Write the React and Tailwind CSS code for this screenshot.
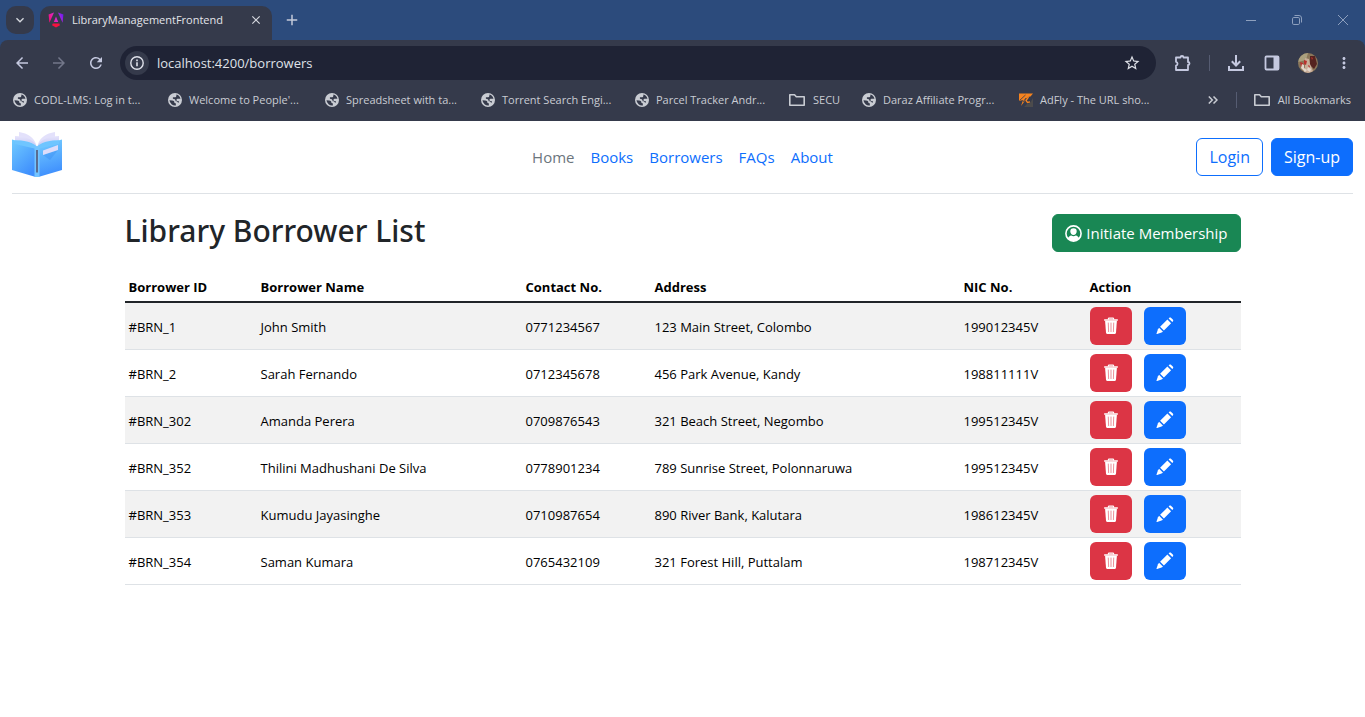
import React from "react";
import {
  MdArrowBack,
  MdArrowForward,
  MdRefresh,
  MdStarOutline,
  MdMoreVert,
  MdClose,
  MdAdd,
  MdExpandMore,
} from "react-icons/md";

const bookmarks = [
  { label: "CODL-LMS: Log in t...", icon: "globe", width: "w-[155px]" },
  { label: "Welcome to People'...", icon: "globe", width: "w-[157px]" },
  { label: "Spreadsheet with ta...", icon: "globe", width: "w-[156px]" },
  { label: "Torrent Search Engi...", icon: "globe", width: "w-[154px]" },
  { label: "Parcel Tracker Andr...", icon: "globe", width: "w-[153px]" },
  { label: "SECU", icon: "folder", width: "w-[74px]" },
  { label: "Daraz Affiliate Progr...", icon: "globe", width: "w-[157px]" },
  { label: "AdFly - The URL sho...", icon: "adfly", width: "w-[157px]" },
];

const borrowers = [
  ["#BRN_1", "John Smith", "0771234567", "123 Main Street, Colombo", "199012345V"],
  ["#BRN_2", "Sarah Fernando", "0712345678", "456 Park Avenue, Kandy", "198811111V"],
  ["#BRN_302", "Amanda Perera", "0709876543", "321 Beach Street, Negombo", "199512345V"],
  ["#BRN_352", "Thilini Madhushani De Silva", "0778901234", "789 Sunrise Street, Polonnaruwa", "199512345V"],
  ["#BRN_353", "Kumudu Jayasinghe", "0710987654", "890 River Bank, Kalutara", "198612345V"],
  ["#BRN_354", "Saman Kumara", "0765432109", "321 Forest Hill, Puttalam", "198712345V"],
];

function AngularLogo() {
  return (
    <svg viewBox="0 0 16 16" className="size-4 shrink-0" aria-hidden="true">
      <defs>
        <linearGradient id="ng" x1="0" y1="0.6" x2="1" y2="0.3">
          <stop offset="0" stopColor="#f4117a" />
          <stop offset="0.5" stopColor="#d92bd0" />
          <stop offset="1" stopColor="#6a1cf0" />
        </linearGradient>
      </defs>
      <path
        fill="url(#ng)"
        d="M6 .5.6 2.4l.8 8.4L6 .5Zm4 0 4.6 10.3.8-8.4L10 .5ZM8 4.600 5.800 10h4.400L8 4.600Z"
      />
      <path fill="#f5113f" d="M4.800 11.500 4 13.200l4 2.400 4-2.400-.8-1.700H4.800Z" />
    </svg>
  );
}

function AdflyIcon() {
  return (
    <svg viewBox="0 0 14 14" className="size-[14px] shrink-0" aria-hidden="true">
      <path fill="#4c4b4c" d="M14 5v9H5l3-3 3-1 3-5Z" />
      <path fill="#f5831f" d="M0 .5h14l-2.500 3L9 4 6.500 6 5 9l-3 4 2-6-4 1V.5Z" />
      <path fill="none" stroke="#f5831f" strokeWidth="1.300" d="M9.500 4 7 7.500l1.500 2 2.500-.7" />
      <path stroke="#353a4b" strokeWidth=".8" d="m.5 7.500 6-5.500M4 9l3-4" />
    </svg>
  );
}

function FolderIcon() {
  return (
    <svg viewBox="0 0 18 14" className="h-[14px] w-[18px] shrink-0" aria-hidden="true">
      <path
        fill="none"
        stroke="currentColor"
        strokeWidth="1.600"
        strokeLinejoin="round"
        d="M1.800 12.200V1.800h4.700l1.800 2h7.900v8.400H1.800Z"
      />
    </svg>
  );
}

function GlobeIcon() {
  return (
    <svg viewBox="2 2 20 20" className="size-[14px] shrink-0" fill="currentColor" aria-hidden="true">
      <path d="M12 2a10 10 0 1 0 0 20 10 10 0 0 0 0-20ZM4.100 12.500l3.900.1c2.200 0 3 1.100 3 2.700 0 1.200 1 1.500 2.200 1.500v2.900a8 8 0 0 1-9.100-7.200Zm11.900 3.100c0-1.500-1.500-1.900-3-1.900-.3-2.700-1.800-3.500-4-3.600V8h3.500c1.500 0 1.500-1.500 1.500-3.700a8 8 0 0 1 5.800 6l-3.300-.2c-1.700 0-2.500.9-2.500 2 0 1 .9 1.400 2 1.400 1.300 0 1.800.9 1.800 2.200l-1.800-.1Z" />
    </svg>
  );
}

function BookmarkIcon({ icon }) {
  if (icon === "folder") return <FolderIcon />;
  if (icon === "adfly") return <AdflyIcon />;
  return <GlobeIcon />;
}

function ProfilePicture() {
  return (
    <svg viewBox="0 0 20 20" className="size-5" aria-hidden="true">
      <defs>
        <clipPath id="avatar">
          <circle cx="10" cy="10" r="10" />
        </clipPath>
      </defs>
      <g clipPath="url(#avatar)">
        <path fill="#8a765a" d="M0 0h20v20H0z" />
        <path fill="#aaa07e" d="M0 0h10l-2 7-8 2z" />
        <path fill="#55231f" d="M12 3h5l2 8-3 5-4-4z" />
        <path fill="#c9ad98" d="m7 5 4 1 1 5 3 7-3 2H6l1-7z" />
        <path fill="#b8322e" d="m2 9 3 1 1 5-3-1zm4-2 3 1-1 4-2-1zm7-3 2 1-1 2zm-3 8 2 1-1 2z" />
        <path fill="#e2d6ca" d="m4 11 2 1 0 3 3 2-2 2-4-4zm6 3 3 2-1 3-3-2z" />
      </g>
    </svg>
  );
}

function BookLogo() {
  return (
    <svg viewBox="0 0 50 45" className="h-[45px] w-[50px]" aria-hidden="true">
      <defs>
        <linearGradient id="coverLeft" x1="0" y1="0" x2="0.6" y2="1">
          <stop offset="0" stopColor="#70cbff" />
          <stop offset="1" stopColor="#3f8ffd" />
        </linearGradient>
        <linearGradient id="coverRight" x1="0.3" y1="0" x2="0.5" y2="1">
          <stop offset="0" stopColor="#74ccff" />
          <stop offset="1" stopColor="#3c8cfd" />
        </linearGradient>
        <linearGradient id="pages" x1="0" y1="0" x2="0" y2="1">
          <stop offset="0" stopColor="#e6e4fc" />
          <stop offset="1" stopColor="#c6c8f3" />
        </linearGradient>
      </defs>
      <path fill="url(#coverLeft)" d="M0 7.500 24 14v31l-2-.5L0 38V7.500Z" />
      <path fill="url(#coverRight)" d="M50 7.500 26 14v31l2-.5L50 38V7.500Z" />
      <path fill="#e3e1fb" d="M7 0c9 1.500 15 5 17.500 13.500L7 9V0Zm36 0c-9 1.500-15 5-17.500 13.500L43 9V0Z" />
      <path fill="url(#pages)" d="M3 4c10 0 18 3 21.500 10C19 9.500 12 8.500 3 8.500V4Zm44 0c-10 0-18 3-21.500 10C31 9.500 38 8.500 47 8.500V4Z" />
      <path fill="#6fc5ff" d="M3 8.300c9 0 16 1.500 21.500 5.700v3L3 12V8.300Zm44 0c-9 0-16 1.500-21.500 5.700v3L47 12V8.300Z" />
      <path fill="#74c4ff" d="m22.500 13.500 2.500.8 2.500-.8V45h-5V13.500Z" />
      <path fill="#5a6c90" d="M24 18h2v22.500h-2z" />
      <path fill="#2f80ee" opacity=".3" d="m31 23 15-5-8 10-7-5Z" />
      <path fill="#dddcfa" d="m31 18.500 15-5.500v5l-15 5v-4.500Z" />
    </svg>
  );
}

function MemberIcon() {
  return (
    <svg viewBox="0 0 17 17" className="size-[17px]" fill="currentColor" aria-hidden="true">
      <circle cx="8.500" cy="8.500" r="7.600" fill="none" stroke="currentColor" strokeWidth="1.600" />
      <path d="M8.500 3.200a3.200 3.200 0 0 1 3.200 3.300c0 1.900-1.500 3.500-3.200 3.500S5.300 8.400 5.300 6.500a3.200 3.200 0 0 1 3.200-3.300Z" />
      <path d="M2.800 13.400c.8-1.800 2-2.600 3.400-2.900.7.500 1.500.7 2.300.7s1.600-.2 2.300-.7c1.400.3 2.600 1.100 3.400 2.900a7.600 7.600 0 0 1-11.400 0Z" />
    </svg>
  );
}

function TrashIcon() {
  return (
    <svg viewBox="0 0 16 18" className="h-[18px] w-4" fill="currentColor" aria-hidden="true">
      <path fill="none" stroke="currentColor" strokeWidth="1.200" d="M5.400 2.600v-.8c0-.5.3-.7.7-.7h3.800c.4 0 .7.200.7.700v.8" />
      <path d="M1.600 2.300h12.800c.4 0 .6.300.6.700s-.2.800-.6.800H1.600C1.200 3.800 1 3.400 1 3s.2-.7.600-.7Z" />
      <path d="M2.100 3.800h11.800l-.9 12c-.1.700-.5 1.200-1.200 1.200H4.200c-.7 0-1.100-.5-1.200-1.200l-.9-12Z" />
      <path stroke="#dc3545" strokeOpacity=".55" strokeWidth="1" strokeLinecap="round" d="m5.300 6 .3 8.600M8 6v8.600M10.700 6l-.3 8.600" />
    </svg>
  );
}

function PencilIcon() {
  return (
    <svg viewBox="0 0 18 18" className="size-[18px]" fill="currentColor" aria-hidden="true">
      <path d="M12.600 1.400 13.100.9c.6-.6 1.500-.6 2.100 0l1.600 1.600c.6.600.6 1.500 0 2.100l-.5.500-3.700-3.700Z" />
      <path d="m11.400 2.600 3.700 3.700-7.200 7.300-3.800-3.800 7.300-7.200Z" />
      <path d="m3.100 10.800 3.900 3.900-1.500.8-4.400 1.500c-.4.100-.7-.2-.6-.6L2 12.200l1.100-1.400Z" />
    </svg>
  );
}

function BrowserChrome() {
  return (
    <header className="bg-[#2c4b7c] text-[#d5d7de]">
      <div className="flex h-10 items-stretch">
        <button type="button" aria-label="Search tabs" className="ml-[6px] mt-[6px] flex size-7 items-center justify-center rounded-[10px] bg-[#353a4b]">
          <MdExpandMore className="size-4" />
        </button>
        <div className="ml-[6px] mt-[6px] flex w-[232px] items-center rounded-t-[10px] bg-[#353a4b] px-2 pb-[6px]">
          <AngularLogo />
          <span className="ml-2 flex-1 whitespace-nowrap text-[11px] leading-4 text-[#e3e5ea]">LibraryManagementFrontend</span>
          <button type="button" aria-label="Close tab" className="flex size-4 items-center justify-center">
            <MdClose className="size-[14px]" />
          </button>
        </div>
        <button type="button" aria-label="New tab" className="ml-[11px] flex items-center text-[#c3cad9]">
          <MdAdd className="size-[18px]" />
        </button>
        <div className="ml-auto flex items-center gap-9 pr-[17px] text-[#8ea0be]">
          <button type="button" aria-label="Minimize">
            <svg viewBox="0 0 10 10" className="size-[10px]" stroke="currentColor" fill="none"><path d="M0 5.500h10" /></svg>
          </button>
          <button type="button" aria-label="Restore">
            <svg viewBox="0 0 10 10" className="size-[10px]" stroke="currentColor" fill="none">
              <rect x=".5" y="2.500" width="7" height="7" rx="1.300" />
              <path d="M2.500.5H7A2.500 2.500 0 0 1 9.500 3v4.500" />
            </svg>
          </button>
          <button type="button" aria-label="Close window">
            <svg viewBox="0 0 10 10" className="size-[10px]" stroke="currentColor" fill="none"><path d="m0 0 10 10M10 0 0 10" /></svg>
          </button>
        </div>
      </div>

      <div className="rounded-t-lg bg-[#353a4b]">
        <div className="flex h-[46px] items-center text-[#c5c9e0]">
          <nav className="flex w-[120px] items-center gap-[19px] pl-[13px]" aria-label="Browser navigation">
            <button type="button" aria-label="Back"><MdArrowBack className="size-[18px]" /></button>
            <button type="button" aria-label="Forward" className="text-[#73778a]"><MdArrowForward className="size-[18px]" /></button>
            <button type="button" aria-label="Reload"><MdRefresh className="size-[18px]" /></button>
          </nav>
          <div className="flex h-[34px] flex-1 items-center rounded-full bg-[#1f2335] pl-[5px] pr-[15px]">
            <button type="button" aria-label="Site information" className="flex size-6 shrink-0 items-center justify-center rounded-full bg-[#353a4b] text-[#dfe1ea]">
              <svg viewBox="0 0 14 14" className="size-[14px]" fill="none" stroke="currentColor" aria-hidden="true">
                <circle cx="7" cy="7" r="6.200" strokeWidth="1.400" />
                <path strokeWidth="1.600" d="M7 6.200V10.300M7 3.600V5.200" />
              </svg>
            </button>
            <input
              aria-label="Address"
              defaultValue="localhost:4200/borrowers"
              className="ml-2 min-w-0 flex-1 bg-transparent text-[13px] leading-5 text-[#dfe1e8] outline-none"
            />
            <button type="button" aria-label="Bookmark this tab" className="text-[#dfe1e8]"><MdStarOutline className="size-[18px]" /></button>
          </div>
          <div className="flex items-center pl-[18px] pr-3">
            <button type="button" aria-label="Extensions">
              <svg viewBox="0 0 18 18" className="size-[18px]" fill="none" stroke="currentColor" strokeWidth="1.800" strokeLinejoin="round" aria-hidden="true">
                <path d="M2 3.500h4.500a1.500 1.500 0 0 1 3 0H14V8a1.500 1.500 0 0 1 0 3v5H2v-4.300a2 2 0 0 0 0-3.900V3.500Z" />
              </svg>
            </button>
            <span className="mx-[17px] h-4 w-px bg-[#565c72]" />
            <button type="button" aria-label="Downloads">
              <svg viewBox="0 0 18 18" className="size-[18px]" fill="none" stroke="currentColor" strokeWidth="2" aria-hidden="true">
                <path d="M9 1v10M4.800 7.300 9 11.500l4.200-4.200M2 12v4h14v-4" />
              </svg>
            </button>
            <button type="button" aria-label="Side panel" className="ml-[18px]">
              <svg viewBox="0 0 18 18" className="size-[18px]" fill="none" stroke="currentColor" aria-hidden="true">
                <rect x="2.500" y="2.500" width="13" height="13" rx="1" strokeWidth="1.800" />
                <path fill="currentColor" stroke="none" d="M10.500 2H16v14h-5.500z" />
              </svg>
            </button>
            <button type="button" aria-label="Profile" className="ml-[17px]"><ProfilePicture /></button>
            <button type="button" aria-label="Menu" className="ml-[17px]"><MdMoreVert className="size-[18px]" /></button>
          </div>
        </div>

        <nav className="flex h-[35px] items-center pb-[7px] pl-[13px] pr-[14px] text-[11px] leading-4 text-[#c9ccd3]" aria-label="Bookmarks">
          {bookmarks.map((b) => (
            <a key={b.label} href="#" className={`flex shrink-0 items-center gap-[7px] whitespace-nowrap ${b.width}`}>
              <BookmarkIcon icon={b.icon} />
              {b.label}
            </a>
          ))}
          <div className="ml-auto flex items-center">
            <button type="button" aria-label="More bookmarks">
              <svg viewBox="0 0 10 8" className="h-2 w-[10px]" fill="none" stroke="currentColor" strokeWidth="1.500" aria-hidden="true">
                <path d="m.8.500 3.500 3.500L.8 7.500M5.500.500 9 4 5.500 7.500" />
              </svg>
            </button>
            <span className="ml-[18px] mr-4 h-4 w-px bg-[#565c72]" />
            <a href="#" className="flex items-center gap-[7px] whitespace-nowrap">
              <FolderIcon />
              All Bookmarks
            </a>
          </div>
        </nav>
      </div>
    </header>
  );
}

function SiteHeader() {
  return (
    <div className="px-3">
      <div className="grid grid-cols-[1fr_auto_1fr] items-end border-b border-[#dee2e6] pb-4 pt-[11px]">
        <a href="#" aria-label="Library home" className="justify-self-start"><BookLogo /></a>
        <nav className="flex gap-4 py-2 text-[15px] leading-6 text-[#0d6efd]" aria-label="Main">
          <a href="#" className="text-[#6c757d]">Home</a>
          <a href="#">Books</a>
          <a href="#">Borrowers</a>
          <a href="#">FAQs</a>
          <a href="#">About</a>
        </nav>
        <div className="flex gap-2 justify-self-end pb-px text-base leading-6">
          <button type="button" className="rounded-md border border-[#0d6efd] px-3 py-[6px] text-[#0d6efd]">Login</button>
          <button type="button" className="rounded-md border border-[#0d6efd] bg-[#0d6efd] px-3 py-[6px] text-white">Sign-up</button>
        </div>
      </div>
    </div>
  );
}

function BorrowerTable() {
  return (
    <table className="mt-5 w-full table-fixed border-collapse text-left text-[13px] leading-5 text-black">
      <colgroup>
        <col className="w-[132px]" />
        <col className="w-[265px]" />
        <col className="w-[129px]" />
        <col className="w-[309px]" />
        <col className="w-[126px]" />
        <col />
      </colgroup>
      <thead>
        <tr className="h-[30px] border-b-2 border-[#212529]">
          {["Borrower ID", "Borrower Name", "Contact No.", "Address", "NIC No.", "Action"].map((h) => (
            <th key={h} scope="col" className="p-1 font-bold">{h}</th>
          ))}
        </tr>
      </thead>
      <tbody>
        {borrowers.map((row) => (
          <tr key={row[0]} className="border-b border-[#dee2e6] odd:bg-[#f2f2f2]">
            {row.map((cell, i) => (
              <td key={i} className="px-1 pb-1 pt-[6px]">{cell}</td>
            ))}
            <td className="p-1">
              <div className="flex gap-3">
                <button type="button" aria-label={`Delete ${row[1]}`} className="flex h-[38px] w-[42px] items-center justify-center rounded-md bg-[#dc3545] text-white">
                  <TrashIcon />
                </button>
                <button type="button" aria-label={`Edit ${row[1]}`} className="flex h-[38px] w-[42px] items-center justify-center rounded-md bg-[#0d6efd] text-white">
                  <PencilIcon />
                </button>
              </div>
            </td>
          </tr>
        ))}
      </tbody>
    </table>
  );
}

export default function App() {
  return (
    <div className="min-h-screen bg-white font-['Segoe_UI','Open_Sans','Noto_Sans',sans-serif]">
      <BrowserChrome />
      <SiteHeader />
      <main className="mx-auto max-w-[1140px] px-3 pt-5">
        <div className="flex items-start justify-between">
          <h1 className="font-['Segoe_UI','Noto_Sans',sans-serif] text-[30px] font-medium leading-[34px] text-[#212529]">Library Borrower List</h1>
          <button type="button" className="flex items-center gap-1 rounded-md border border-[#198754] bg-[#198754] px-3 py-[6px] text-[15px] leading-6 text-white">
            <MemberIcon />
            Initiate Membership
          </button>
        </div>
        <BorrowerTable />
      </main>
    </div>
  );
}
